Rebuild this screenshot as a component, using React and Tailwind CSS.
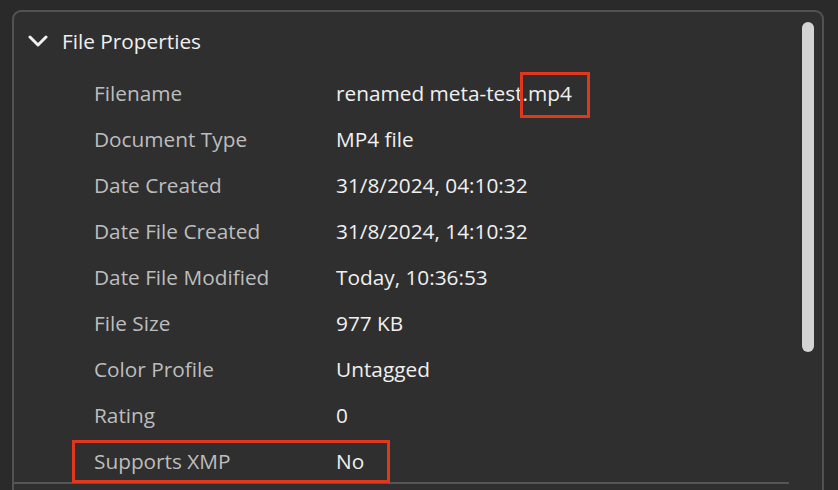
import React from "react";

const rows = [
  ["Filename", "renamed meta-test.mp4"],
  ["Document Type", "MP4 file"],
  ["Date Created", "31/8/2024, 04:10:32"],
  ["Date File Created", "31/8/2024, 14:10:32"],
  ["Date File Modified", "Today, 10:36:53"],
  ["File Size", "977 KB"],
  ["Color Profile", "Untagged"],
  ["Rating", "0"],
  ["Supports XMP", "No"],
];

const App = () => {
  return (
    <div
      className="relative w-[838px] h-[490px] overflow-hidden bg-[#2a2a2a] pt-[10px] pl-[12px]"
      style={{ fontFamily: '"Open Sans", "Noto Sans", sans-serif' }}
    >
      {/* Panel */}
      <div className="w-[812px] h-[500px] flex border-2 border-b-0 border-[#525252] rounded-t-[9px] bg-[#2f2f2f]">
        {/* Content */}
        <div className="w-[775px] flex flex-col">
          {/* Header */}
          <div className="h-[59px] flex items-center pl-[14px]">
            <svg width="20" height="13" viewBox="0 0 20 13" className="mr-[14px]">
              <polyline
                points="2,2 10,10 18,2"
                fill="none"
                stroke="#f0f0f0"
                strokeWidth="3"
                strokeLinecap="round"
                strokeLinejoin="round"
              />
            </svg>
            <span className="text-[20.8px] font-medium text-[#f0f0f0]">File Properties</span>
          </div>

          {/* Rows */}
          {rows.map(([label, value], i) => (
            <div
              key={label}
              className={
                i === rows.length - 1
                  ? "h-[43px] flex items-start pt-[7px] pl-[80px] text-[20.8px]"
                  : "h-[46px] flex items-center pl-[80px] text-[20.8px]"
              }
            >
              <span className="w-[242px] text-[#bdbdbd]">{label}</span>
              <span className="font-medium text-[#f0f0f0]">{value}</span>
            </div>
          ))}

          {/* Separator */}
          <div className="h-[2px] bg-[#555555]" />
        </div>

        {/* Scrollbar gutter */}
        <div className="flex-1 pt-[10px] pl-[13px]">
          <div className="w-[12px] h-[330px] rounded-full bg-[#d4d4d4]" />
        </div>
      </div>

      {/* Annotation boxes */}
      <div className="absolute left-[520px] top-[72px] w-[70px] h-[46px] border-[3px] border-[#e0381d]" />
      <div className="absolute left-[72px] top-[440px] w-[318px] h-[43px] border-[3px] border-[#e0381d]" />
    </div>
  );
};

export default App;
